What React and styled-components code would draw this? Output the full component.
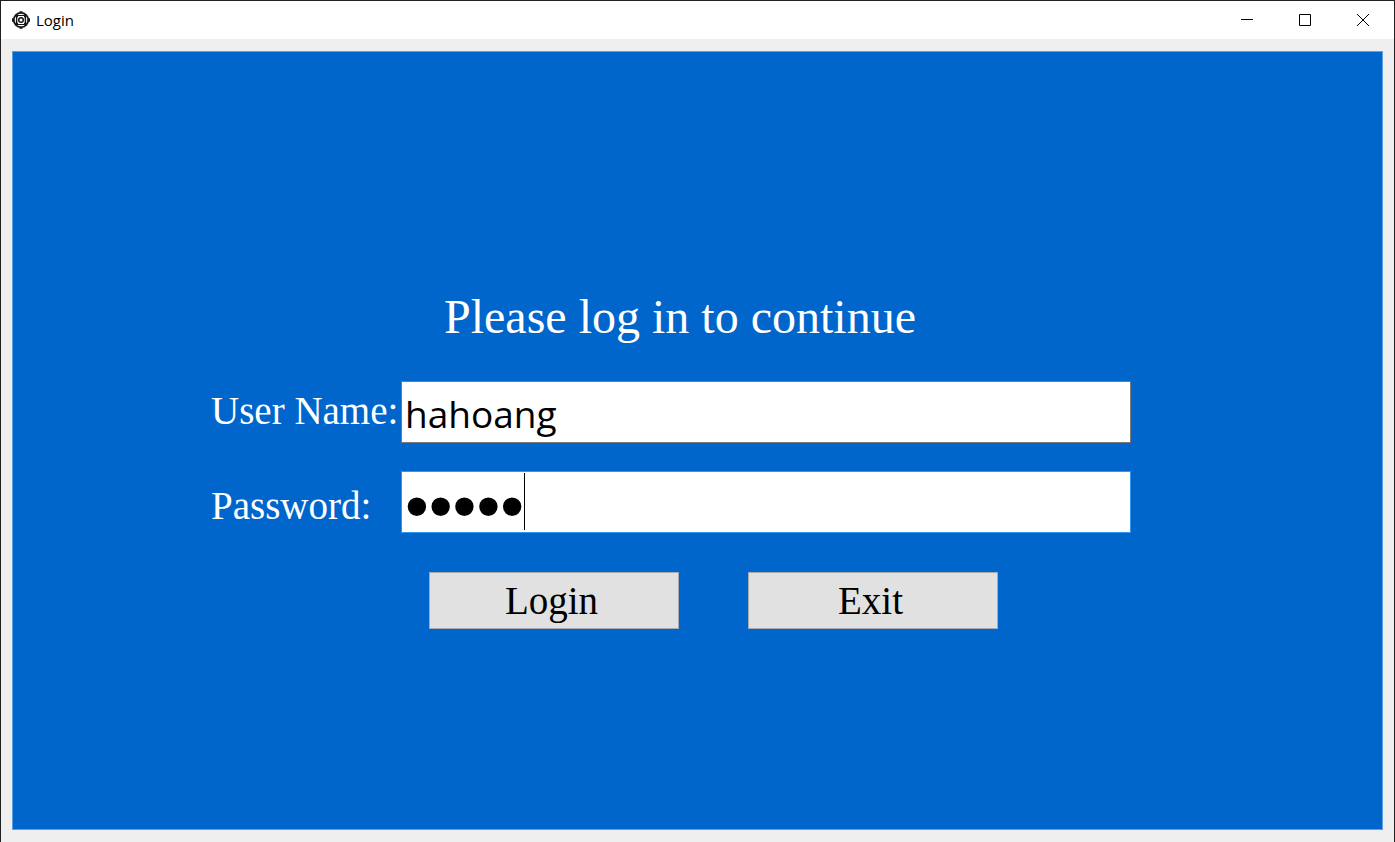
import React from "react";
import styled, { createGlobalStyle } from "styled-components";

const GlobalStyle = createGlobalStyle`
  *, *::before, *::after { box-sizing: border-box; }
  body { margin: 0; background: #efefef; }
`;

const Window = styled.div`
  display: flex;
  flex-direction: column;
  min-height: 100vh;
  border: 1px solid #202020;
  border-bottom: 0;
  background: #efefef;
`;

const TitleBar = styled.header`
  display: flex;
  align-items: center;
  height: 38px;
  padding-left: 11px;
  background: #fff;
`;

const WindowTitle = styled.h1`
  flex: 1;
  margin: 0 0 0 6px;
  font: 400 15px/18px "Open Sans", "Noto Sans", sans-serif;
  color: #000;
`;

const WindowControls = styled.div`
  display: flex;
  padding-right: 2px;
`;

const WindowButton = styled.button`
  display: grid;
  place-items: center;
  width: 58px;
  height: 38px;
  padding: 0;
  border: 0;
  background: transparent;
`;

const Panel = styled.main`
  flex: 1;
  margin: 12px 11px 12px;
  padding: 237px 251px 32px 198px;
  border: 1px solid #5c9fe3;
  background: #0066cc;
  font-family: "Liberation Serif", serif;
`;

const Heading = styled.h2`
  margin: 0 0 36px;
  padding-left: 18px;
  text-align: center;
  font-size: 48px;
  font-weight: 400;
  line-height: 56px;
  color: #fff;
`;

const Fields = styled.div`
  display: flex;
`;

const LabelColumn = styled.div`
  display: flex;
  flex-direction: column;
  flex: 0 0 190px;
  gap: 35px;
`;

const Label = styled.label`
  font-size: 39px;
  line-height: 60px;
  color: #fff;
  white-space: nowrap;
`;

const InputColumn = styled.div`
  display: flex;
  flex-direction: column;
  flex: 1;
  gap: 28px;
`;

const InputWrap = styled.div`
  position: relative;
  display: flex;
`;

const TextInput = styled.input`
  width: 100%;
  height: 62px;
  padding: 2px 3px 0;
  border: 1px solid ${(p) => (p.$active ? "#2f95f0" : "#7a7a7a")};
  border-radius: 0;
  outline: 0;
  background: #fff;
  color: #000;
  font: 400 37px "Open Sans", "Noto Sans", sans-serif;
`;

const PasswordInput = styled(TextInput)`
  padding-top: 6px;
  caret-color: transparent;
  font: 400 68px "Liberation Sans", sans-serif;
`;

const Caret = styled.span`
  position: absolute;
  top: 2px;
  bottom: 3px;
  left: 123px;
  width: 1px;
  background: #000;
`;

const Actions = styled.div`
  display: flex;
  justify-content: center;
  gap: 69px;
  padding-top: 36px;
  padding-left: 84px;
`;

const ActionButton = styled.button`
  width: 250px;
  height: 57px;
  padding: 0 4px 0 0;
  border: 1px solid #a5abb1;
  border-radius: 0;
  background: #e1e1e1;
  color: #000;
  font: 400 39px/55px "Liberation Serif", serif;
`;

const AppIcon = () => (
  <svg width="18" height="18" viewBox="0 0 18 18" fill="none" stroke="#161616" aria-hidden="true">
    <circle cx="9" cy="9" r="7.2" strokeWidth="1.8" />
    <circle cx="9" cy="9" r="2.3" strokeWidth="1.5" />
    <path d="M7.5 1h3M7.5 17h3M.8 7.2v3.6M17.2 7.2v3.6" strokeWidth="1.6" />
    <path d="M6 5.5H4.6v7H6M12 5.5h1.4v7H12" strokeWidth="1.4" />
    <path d="M4 4.5h10M4 13.5h10" strokeWidth="1.2" />
  </svg>
);

export default function App() {
  return (
    <>
      <GlobalStyle />
      <Window>
        <TitleBar>
          <AppIcon />
          <WindowTitle>Login</WindowTitle>
          <WindowControls>
            <WindowButton type="button" aria-label="Minimize">
              <svg width="12" height="12" stroke="#000"><path d="M0 5.5h12" /></svg>
            </WindowButton>
            <WindowButton type="button" aria-label="Maximize">
              <svg width="12" height="12" fill="none" stroke="#000"><path d="M.5.5h11v11H.5z" /></svg>
            </WindowButton>
            <WindowButton type="button" aria-label="Close">
              <svg width="12" height="12" stroke="#000"><path d="m0 0 12 12M12 0 0 12" /></svg>
            </WindowButton>
          </WindowControls>
        </TitleBar>
        <Panel>
          <form onSubmit={(e) => e.preventDefault()}>
            <Heading>Please log in to continue</Heading>
            <Fields>
              <LabelColumn>
                <Label htmlFor="username">User Name:</Label>
                <Label htmlFor="password">Password:</Label>
              </LabelColumn>
              <InputColumn>
                <InputWrap>
                  <TextInput id="username" type="text" defaultValue="hahoang" spellCheck={false} />
                </InputWrap>
                <InputWrap>
                  <PasswordInput id="password" type="password" defaultValue="admin" $active />
                  <Caret />
                </InputWrap>
              </InputColumn>
            </Fields>
            <Actions>
              <ActionButton type="submit">Login</ActionButton>
              <ActionButton type="button">Exit</ActionButton>
            </Actions>
          </form>
        </Panel>
      </Window>
    </>
  );
}
